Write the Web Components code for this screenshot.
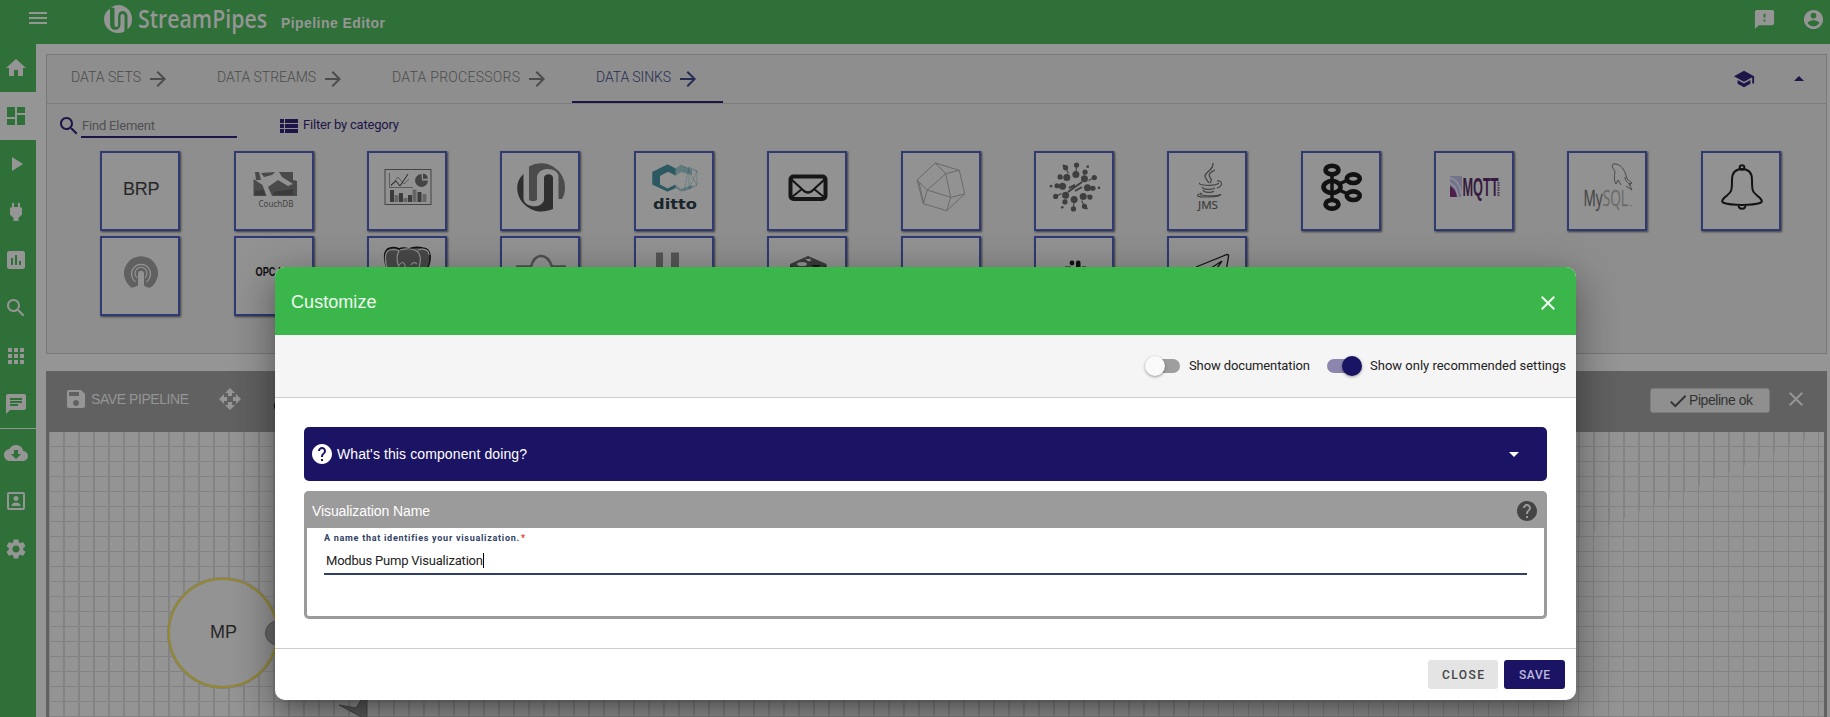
<!DOCTYPE html>
<html lang="en"><head><meta charset="utf-8"><title>StreamPipes - Pipeline Editor</title>
<style>html,body{margin:0;height:100%;overflow:hidden;background:#959595;font-family:"Liberation Sans",Arial,sans-serif}</style></head>
<body><sp-app></sp-app>
<script>
const define=(name,css,html,init)=>{
  const t=document.createElement('template');
  t.innerHTML=`<style>*{box-sizing:border-box}:host{display:block;box-sizing:border-box}${css}</style>${html}`;
  customElements.define(name,class extends HTMLElement{
    connectedCallback(){ if(this.shadowRoot)return;
      const r=this.attachShadow({mode:'open'}); r.appendChild(t.content.cloneNode(true)); if(init)init(this,r); }
  });
};
/* ---- icon set on a 24 unit grid ---- */
const ICONS={
 menu:'M3 18h18v-2H3v2zm0-5h18v-2H3v2zm0-7v2h18V6H3z',
 home:'M10 20v-6h4v6h5v-8h3L12 3 2 12h3v8z',
 dashboard:'M3 13h8V3H3v10zm0 8h8v-6H3v6zm10 0h8V11h-8v10zm0-18v6h8V3h-8z',
 play:'M8 5v14l11-7z',
 power:'M16.01 7L16 3h-2v4h-4V3H8v4h-.01C7 6.99 6 7.99 6 8.99v5.49L9.5 18v3h5v-3l3.5-3.51v-5.5c0-1-1-2-1.99-1.99z',
 chart:'M19 3H5c-1.1 0-2 .9-2 2v14c0 1.1.9 2 2 2h14c1.1 0 2-.9 2-2V5c0-1.1-.9-2-2-2zM9 17H7v-7h2v7zm4 0h-2V7h2v10zm4 0h-2v-4h2v4z',
 search:'M15.5 14h-.79l-.28-.27C15.41 12.59 16 11.11 16 9.5 16 5.91 13.09 3 9.5 3S3 5.91 3 9.5 5.91 16 9.5 16c1.61 0 3.09-.59 4.23-1.57l.27.28v.79l5 4.99L20.49 19l-4.99-5zm-6 0C7.01 14 5 11.99 5 9.5S7.01 5 9.5 5 14 7.01 14 9.5 11.99 14 9.5 14z',
 apps:'M4 8h4V4H4v4zm6 12h4v-4h-4v4zm-6 0h4v-4H4v4zm0-6h4v-4H4v4zm6 0h4v-4h-4v4zm6-10v4h4V4h-4zm-6 4h4V4h-4v4zm6 6h4v-4h-4v4zm0 6h4v-4h-4v4z',
 chat:'M20 2H4c-1.1 0-1.99.9-1.99 2L2 22l4-4h14c1.1 0 2-.9 2-2V4c0-1.1-.9-2-2-2zM6 9h12v2H6V9zm8 5H6v-2h8v2zm4-6H6V6h12v2z',
 cloud:'M19.35 10.04C18.67 6.59 15.64 4 12 4 9.11 4 6.6 5.64 5.35 8.04 2.34 8.36 0 10.91 0 14c0 3.31 2.69 6 6 6h13c2.76 0 5-2.24 5-5 0-2.64-2.05-4.78-4.65-4.96zM17 13l-5 5-5-5h3V9h4v4h3z',
 person:'M19 5v14H5V5h14m0-2H5c-1.1 0-2 .9-2 2v14c0 1.1.9 2 2 2h14c1.1 0 2-.9 2-2V5c0-1.1-.9-2-2-2zm-7 9c1.65 0 2.5-1 2.5-2.5S13.65 7 12 7 9.500 8 9.500 9.500 10.350 12 12 12zm4.500 5H7.500v-.7c0-1.6 2.500-2.800 4.500-2.800s4.500 1.200 4.500 2.800v.7z',
 gear:'M19.140 12.940c.04-.3.06-.61.06-.94 0-.32-.02-.64-.07-.94l2.030-1.580c.18-.14.23-.41.12-.61l-1.920-3.320c-.12-.22-.37-.29-.59-.22l-2.390.96c-.5-.38-1.030-.7-1.620-.94l-.36-2.540c-.04-.24-.24-.41-.48-.41h-3.840c-.24 0-.43.17-.47.41l-.36 2.540c-.59.24-1.130.57-1.620.94l-2.390-.96c-.22-.08-.47 0-.59.22L2.740 8.870c-.12.21-.08.47.12.61l2.030 1.580c-.05.3-.09.63-.09.94s.02.64.07.94l-2.030 1.580c-.18.14-.23.41-.12.61l1.920 3.320c.12.22.37.29.59.22l2.390-.96c.5.38 1.030.7 1.620.94l.36 2.540c.05.24.24.41.48.41h3.840c.24 0 .44-.17.47-.41l.36-2.540c.59-.24 1.130-.56 1.620-.94l2.390.96c.22.08.47 0 .59-.22l1.920-3.320c.12-.22.07-.47-.12-.61l-2.010-1.580zM12 15.600c-1.980 0-3.600-1.620-3.600-3.600s1.620-3.600 3.600-3.600 3.600 1.620 3.600 3.600-1.620 3.600-3.600 3.600z',
 feedback:'M20 2H4c-1.1 0-1.99.9-1.99 2L2 22l4-4h14c1.1 0 2-.9 2-2V4c0-1.1-.9-2-2-2zm-7 12h-2v-2h2v2zm0-4h-2V6h2v4z',
 account:'M12 2C6.48 2 2 6.48 2 12s4.480 10 10 10 10-4.480 10-10S17.520 2 12 2zm0 3c1.660 0 3 1.340 3 3s-1.340 3-3 3-3-1.340-3-3 1.340-3 3-3zm0 14.200c-2.500 0-4.710-1.280-6-3.220.03-1.990 4-3.080 6-3.080 1.990 0 5.970 1.090 6 3.080-1.290 1.940-3.500 3.220-6 3.220z',
 arrow:'M12 4l-1.410 1.410L16.170 11H4v2h12.170l-5.580 5.590L12 20l8-8z',
 school:'M5 13.180v4L12 21l7-3.820v-4L12 17l-7-3.820zM12 3L1 9l11 6 9-4.910V17h2V9L12 3z',
 up:'M7 14l5-5 5 5z', down:'M7 10l5 5 5-5z',
 list:'M3 14h4v-4H3v4zm0 5h4v-4H3v4zM3 9h4V5H3v4zm5 5h13v-4H8v4zm0 5h13v-4H8v4zM8 5v4h13V5H8z',
 save:'M17 3H5c-1.110 0-2 .9-2 2v14c0 1.100.89 2 2 2h14c1.100 0 2-.9 2-2V7l-4-4zm-5 16c-1.660 0-3-1.340-3-3s1.340-3 3-3 3 1.340 3 3-1.340 3-3 3zm3-10H5V5h10v4z',
 move:'M10 9h4V6h3l-5-5-5 5h3v3zm-1 1H6V7l-5 5 5 5v-3h3v-4zm14 2l-5-5v3h-3v4h3v3l5-5zm-9 3h-4v3H7l5 5 5-5h-3v-3z',
 close:'M19 6.410L17.590 5 12 10.590 6.410 5 5 6.410 10.590 12 5 17.590 6.410 19 12 13.410 17.590 19 19 17.590 13.410 12z',
 check:'M9 16.170L4.830 12l-1.420 1.410L9 19 21 7l-1.410-1.410z',
 help:'M12 2C6.480 2 2 6.480 2 12s4.480 10 10 10 10-4.480 10-10S17.520 2 12 2zm1 17h-2v-2h2v2zm2.070-7.750l-.9.92C13.450 12.900 13 13.500 13 15h-2v-.5c0-1.100.45-2.100 1.170-2.830l1.240-1.260c.37-.36.59-.86.59-1.410 0-1.100-.9-2-2-2s-2 .9-2 2H8c0-2.210 1.790-4 4-4s4 1.790 4 4c0 .88-.36 1.680-.93 2.250z'
};
define('sp-icon',':host{flex:none;width:24px;height:24px}svg{display:block;width:100%;height:100%;fill:currentColor}','<svg viewBox="0 0 24 24"><path/></svg>',
 (h,r)=>r.querySelector('path').setAttribute('d',ICONS[h.getAttribute('name')]));
/* one-line label tracked out (or in) to a set width */
define('sp-label',':host{white-space:nowrap;flex:none}span{display:inline-block}','<span></span>',(h,r)=>{
  const s=r.querySelector('span'); s.textContent=h.getAttribute('text'); const w=+h.getAttribute('w');
  if(w){ s.style.letterSpacing='0px'; const n=s.getBoundingClientRect().width; s.style.letterSpacing=(w-n)/(s.textContent.length-1)+'px'; h.style.width=w+'px'; }
});
define('sp-header',`:host{height:44px;background:#2e7037;color:#959595;display:flex;align-items:flex-start}
 .m{margin:6px 0 0 26px}.logo{margin:5px 0 0 54px;display:block}
 .t{margin:15px 0 0 -17px;font-weight:bold;font-size:14px;line-height:17px}.sp{flex:1}
 .f{width:23px;height:23px;margin:8px 26px 0 0}.a{width:23px;height:23px;margin:8px 5px 0 0}`,
 `<sp-icon class="m" name="menu"></sp-icon>
 <svg class="logo" width="194" height="34" viewBox="104 5 194 34"><g fill="#959595"><path d="M111 7.500a14 14 0 0 1 15 0 14 14 0 0 1 6 11.500c0 5-1.500 8-4.500 10.500V16a4.500 4.500 0 0 0-9 0v9a2 2 0 0 1-4 0V8z"/><path d="M110 8.800C106 11 104 15 104 19a14 14 0 0 0 20.500 12.500V16a2 2 0 0 0-4 0v8c0 7-9 7-10 1z"/></g>
 <path d="M111 9v15.500c0 6 8 6 8 0V16.500c0-6 7-6 7 0V31" fill="none" stroke="#2e7037" stroke-width="1.500"/>
 <text x="138" y="28" font-size="25" font-family="Open Sans,Noto Sans,sans-serif" font-weight="600" fill="#959595" textLength="129" lengthAdjust="spacingAndGlyphs">StreamPipes</text></svg>
 <sp-label class="t" text="Pipeline Editor" w="104"></sp-label><div class="sp"></div><sp-icon class="f" name="feedback"></sp-icon><sp-icon class="a" name="account"></sp-icon>`);
define('sp-nav',`:host{width:36px;background:#2e7037;color:#959595}div{height:48px;padding:12px 4px}.on{background:#959595;color:#2e7037}hr{height:1px;border:0;margin:0;background:#959595}`,
 ['home','dashboard','play','power','chart','search','apps','chat','|','cloud','person','gear'].map(n=>n=='|'?'<hr>':`<div class="${n=='dashboard'?'on':''}"><sp-icon name="${n}"></sp-icon></div>`).join(''));
define('sp-tab',`:host{display:flex;align-items:center;height:48px;padding:0 23px 0 24px;gap:5px;color:#4c4c4c;font:300 14px Roboto,sans-serif}
 :host([on]){color:#262d52;box-shadow:inset 0 -2px #1d1547}sp-label{margin-top:-4px}`,'<sp-label></sp-label><sp-icon name="arrow"></sp-icon>',
 (h,r)=>{const l=r.querySelector('sp-label');const n=document.createElement('sp-label');n.setAttribute('text',h.getAttribute('text'));n.setAttribute('w',h.getAttribute('w'));l.replaceWith(n)});

const burst=()=>{let s='';const c=[41,36];
 for(let i=0;i<8;i++){const a=(i*45+4)*Math.PI/180;s+=`<circle cx="${c[0]+12.500*Math.sin(a)}" cy="${c[1]-12.500*Math.cos(a)}" r="3.500"/>`}
 for(let i=0;i<12;i++){const a=(i*30+4)*Math.PI/180,q=i%3==0,r=q?(i%6?18:22):(i%3==1?18:21.500),x=c[0]+r*Math.sin(a),y=c[1]-r*Math.cos(a);s+=`<circle cx="${x}" cy="${y}" r="2.600"/><path d="M${x} ${y}L${c[0]+15*Math.sin(a)} ${c[1]-15*Math.cos(a)}" stroke="#3f3f3f" stroke-width="1.100"/>`}
 for(let i=0;i<6;i++){const a=(i*60+32)*Math.PI/180;s+=`<circle cx="${c[0]+24*Math.sin(a)}" cy="${c[1]-24*Math.cos(a)}" r="1.300"/>`}
 return `<g fill="#3f3f3f">${s}<path d="M34 41l14-10M35 37l6-3M41 40l7-4" stroke="#3f3f3f" stroke-width="2"/></g>`};
const ART={
 brp:'<text x="23" y="44" font-size="18" fill="#262626" textLength="36.500">BRP</text>',
 couch:'<path d="M21 21h4l2 8h-5zM45 21h14v8l4 1v15H38l-4-9 10-7 10 6 5-2-11-7zM19.500 28l9 6 4 11h-13zM27 22l14-1-3 3-8 2z" fill="#4a4a4a"/><path d="M21 40l9-1 1 5H21zM39 41l20-3v6H40z" fill="#3c3c3c"/><text x="24.500" y="55.500" font-family="Noto Sans" font-size="8" fill="#424242" textLength="35" lengthAdjust="spacingAndGlyphs">CouchDB</text>',
 dash:'<rect x="18" y="18.500" width="46" height="35" fill="none" stroke="#444"/><path d="M22.500 22v14.500H46M24 35l7-9 6 7 5-5" fill="none" stroke="#555" stroke-width=".9"/><path d="M24 34l5-4 4 5 8-12" fill="none" stroke="#222"/><path d="M54.500 23a6.500 6.500 0 1 0 6.500 6.500h-6z" fill="#444"/><path d="M56 28v-5.500a6 6 0 0 1 5 5z" fill="#444"/><path d="M23 39h4v12h-4zM32 42h4v9h-4zM41 44h4v7h-4zM50.500 41h4v10h-4z" fill="#3c3c3c"/><path d="M27.500 44h4v7h-4zM36.500 47h4v4h-4zM45.500 38.500h4V51h-4zM55.500 43h4v8h-4z" fill="#666"/>',
 unify:'<path d="M29 15.500A24 24 0 0 1 65 37c0 4-1 8-3 11h-3.500V26c0-10-20-11-21.500 0v22c0 3-8 3-8 0z" fill="#4b4b4b"/><path d="M23.500 23C15 30 15 45 25 54s20 7 28 4V27c0-5-9-5-9 0v22c-2 9-19 8-20.500-1z" fill="#2f2f2f"/>',
 ditto:'<path d="M33.500 13.500l8 4-0 3.500-8 0-7.500 4v9l7.500 4 8-4 0 3-8 3.500-15-7V21z" fill="#2d5a62"/><path d="M33.500 13.500l8 4v7l-8-4-7.500 4v9l7.500 4 8-4v3.500l-8 3.500-15-7V21z" fill="#2d5a62"/><path d="M41 18l6-4.500 11 5.500v5l-11-3-6 4zM41 34l6 4 11-4v3l-11 3.500-6-4z" fill="#416b70" opacity=".6"/><path d="M50 16l13 4v14l-13 6 5-24v22l8-18-8-4m0 22l8-4-8-14" fill="none" stroke="#34626a" stroke-width=".7" stroke-dasharray="1 1"/><text x="19" y="58" font-family="DejaVu Sans" font-weight="bold" font-size="13.500" fill="#18262c" textLength="44" lengthAdjust="spacingAndGlyphs">ditto</text>',
 mail:'<rect x="23.500" y="25.500" width="35" height="22.500" rx="3" fill="none" stroke="#161616" stroke-width="4"/><path d="M24 28l13 12q4 3 8 0l13-12M25 46l10-8M57 46l-10-8" fill="none" stroke="#161616" stroke-width="2.200"/>',
 poly:'<path d="M34.300 12l24 7.300L63.700 43l-18 16.700-23.400-7L16 29zM34.300 12l10.400 10.700 13.600-3.400M44.700 22.700L26.300 39 16 29M44.700 22.700l5 23.600L26.300 39l-4 13.700M49.700 46.300l14-3.300M49.700 46.300l-4 13.400M18 31l4.500 21" fill="none" stroke="#6a6a6a" stroke-width="1"/>',
 burst:burst(),
 jms:'<path d="M46 12c1 7-8 9-8 13 0 2 2 4 4 7M48 19c-8 4-6 6-4 9 1 2 0 3-1 4" fill="none" stroke="#444" stroke-width="1.300"/><path d="M33 32c-4 2 15 4 19 0M35 36c1 3 10 3 13 1M36 39c1 3 9 3 11 1M50 30c6-1 6 5 0 7M32 43c-5 3 3 3 9 3s13-1 13-3M35 42c-10 3 18 4 18 1" fill="none" stroke="#444" stroke-width="1.100"/><text x="31" y="57.700" font-family="Open Sans,Noto Sans" font-size="11.500" fill="#3b3b3b" stroke="#3b3b3b" stroke-width=".2" textLength="20" lengthAdjust="spacingAndGlyphs">JMS</text>',
 kafka:'<g fill="none" stroke="#121212" stroke-width="4.600"><path d="M31 24v24M38 33l9-4M38 39l9 4" stroke-width="3.500"/><ellipse cx="31" cy="19" rx="6.500" ry="4.300"/><ellipse cx="52.300" cy="27.700" rx="6.500" ry="4.300"/><ellipse cx="31" cy="36" rx="8.500" ry="6"/><ellipse cx="52.300" cy="44.700" rx="6.500" ry="4.300"/><ellipse cx="31" cy="53.300" rx="6.500" ry="4.300"/></g>',
 mqtt:'<rect x="16" y="25" width="12" height="21" fill="#73738a"/><path d="M16 27q10 2 12 19M16 32q7 3 8 14" stroke="#8f8f9c" stroke-width="1.500" fill="none"/><path d="M16 35q6 3 7 11h-7z" fill="#4e1d4c"/><text transform="translate(28.500 44.500) scale(.49 1)" font-size="26" font-weight="bold" fill="#361b40">MQTT</text><path d="M64.500 31v14" stroke="#443050" stroke-width="2" stroke-dasharray="1.500 1"/>',
 mysql:'<text x="16.500" y="55" font-family="Open Sans,Noto Sans" font-size="22" fill="#484848" stroke="#484848" stroke-width=".3" textLength="44.500" lengthAdjust="spacingAndGlyphs">My<tspan fill="#6c6c6c" stroke="#6c6c6c">SQL</tspan></text><path d="M62 54.500h3" stroke="#777"/><path d="M46 13c-2 3 1 5 2 8-1 5-1 9 1 12l2-4 3 5M46 13c8-1 12 6 14 15l5 4-3 1 3 6-6-4M58 26c0 4 3 6 6 8" fill="none" stroke="#4b4b4b"/>',
 bell:'<g fill="none" stroke="#131313" stroke-width="2"><circle cx="41" cy="16.500" r="2.300"/><path d="M41 18c-8 0-10 5-10 11 0 13-1 12-7 17-3 3-4 5-1 6 7 2.500 29 2.500 36 0 3-1 2-3-1-6-6-5-7-4-7-17 0-6-2-11-10-11zM37.500 54c0 5 7 5 7 0"/></g>',
 pod:'<g transform="translate(0 .7)"><path d="M32 51a17 17 0 1 1 18 0q-3 0-6-2V37a3 3 0 0 0-6 0v12q-3 1-6 2z" fill="#606060"/><g fill="none" stroke="#929292" stroke-width="1.200"><path d="M35.500 45a9.500 9.500 0 1 1 11 0M37 41a6 6 0 1 1 8 0"/></g><path d="M39.500 36h3v15h-3z" fill="#929292"/></g>',
 opc:'<text x="21.500" y="40.300" font-size="12.500" font-weight="bold" fill="#111" textLength="36" lengthAdjust="spacingAndGlyphs">OPC UA</text>',
 pg:'<path d="M22 36c-5-9-7-22 1-24 4-1 7 0 9 1 4-2 7-1 10 0 4-2 9-2 14-1 9 1 9 12 3 24z" fill="#484848" stroke="#131313" stroke-width="1.500"/><path d="M22 36c-5-9-5-21 1-22 4-1 8 0 9 1-3 5-2 12 0 16M33 14c7-2 14-1 17 1 4 4 4 10 2 16M51 14c6-2 11 0 11 5M32 29q4-5 6 0v5M50 28q-4-3-6 1" fill="none" stroke="#929292" stroke-width="1.200"/>',
 sum:'<path d="M16 30.500h15c4-14 16-14 21 0h14" fill="none" stroke="#505050" stroke-width="2.600"/>',
 bars:'<path d="M22 16.500h7V40h-7zM37 16.500h8V40h-8z" fill="#555"/>',
 redis:'<path d="M23 28l18-8 18.500 8v12H23z" fill="#3a3a3a"/><path d="M23 30l18 7 18.500-7" stroke="#202020" fill="none"/><ellipse cx="35" cy="28" rx="5" ry="2" fill="#929292"/><path d="M38 22.500l3 .8 3-1-1 1.700 2 1-4 .2z" fill="#999"/><path d="M44 29l10 0-5 3z" fill="#151515"/>',
 none:'',
 slack:'<g fill="#101010"><circle cx="38" cy="27" r="2.400"/><rect x="42" y="24.500" width="4.500" height="10" rx="2"/></g><path d="M31 30.500h6M48 30.500h4" stroke="#555"/>',
 tele:'<path d="M29 31l31-12.500q2 0 1.500 2l-2.500 15M44 32l11-7-5 7" fill="none" stroke="#141414" stroke-width="1.300"/>'
};
define('sp-card',`:host{width:80px;height:80px;background:#929292;border:2px solid #2f3a72;box-shadow:1px 1px 2px 0 #3c3c3c}svg{display:block;margin:-2px;width:80px;height:80px;font-family:"Liberation Sans",sans-serif}`,
 '<svg viewBox="0 0 80 80"></svg>',(h,r)=>{r.querySelector('svg').innerHTML=ART[h.getAttribute('art')]});
define('sp-elements',`:host{margin:10px 3px 0 10px;height:300px;border:1px solid #797979;background:#8e8e8e;color:#1d1547}
 .tabs{display:flex;height:49px;border-bottom:1px solid #7d7d7d}.sp{flex:1}
 .sc{margin:13px 32px 0 0;width:22px;height:22px}.up{margin:12px 15px 0 0}
 .bar{display:flex;height:34px;align-items:flex-start;font:13px Roboto,sans-serif}
 .s{margin:10px 0 0 10px;width:24px;height:24px}.in{margin-left:0;width:156px;height:34px;border-bottom:2px solid #1d1547;color:#505050;padding:14px 0 0 1px}
 .l{margin:10px 0 0 40px}.f{margin:13px 0 0 2px}
 .grid{display:grid;grid-template-columns:repeat(13,133.400px);gap:5px 0;margin:13px 0 0 26.500px;justify-items:center}`,
 `<div class="tabs"><sp-tab text="DATA SETS" w="70"></sp-tab><sp-tab text="DATA STREAMS" w="99"></sp-tab><sp-tab text="DATA PROCESSORS" w="128"></sp-tab><sp-tab on text="DATA SINKS" w="75"></sp-tab><div class="sp"></div><sp-icon class="sc" name="school"></sp-icon><sp-icon class="up" name="up"></sp-icon></div>
 <div class="bar"><sp-icon class="s" name="search"></sp-icon><div class="in"><sp-label text="Find Element" w="73"></sp-label></div><sp-icon class="l" name="list"></sp-icon><sp-label class="f" text="Filter by category" w="96"></sp-label></div>
 <div class="grid">${'brp couch dash unify ditto mail poly burst jms kafka mqtt mysql bell pod opc pg sum bars redis none slack tele'.split(' ').map(a=>`<sp-card art="${a}"></sp-card>`).join('')}</div>`);
define('sp-canvas',`:host{margin:17px 3px 0 10px;flex:1;border:3px solid #616161;border-top:0;border-bottom:0;background:#949494;display:flex;flex-direction:column}
 .bar{height:61px;flex:none;background:#616161;color:#959595;display:flex;align-items:flex-start;font-size:14px}
 .sv{margin:16px 0 0 15px}.st{margin:20px 0 0 3px;line-height:16px}.mv{margin:16px 0 0 29px}.mg{width:22px;height:22px;margin:26px 0 0 29px;color:#222}.sp{flex:1}
 .ok{margin:17px 14px 0 0;width:120px;height:25px;background:#8f8f8f;border:1px solid #7b7b7b;border-radius:3px;display:flex;color:#333;padding-left:15px;line-height:22px}.cl{margin:16px 16px 0 0}
 .ok sp-icon{width:22px;height:22px;margin:1px 0 0 1px}
 .paper{flex:1;position:relative;overflow:hidden;background:repeating-linear-gradient(90deg,transparent 0 14px,#838383 14px 15px),repeating-linear-gradient(180deg,transparent 0 14px,#838383 14px 15px)}
 .thick{position:absolute;inset:0;clip-path:polygon(0 0,1771px 0,1100px 295px,0 295px);background:repeating-linear-gradient(90deg,#848484 0 1px,transparent 1px 15px)}
 svg{position:absolute;left:0;top:0}`,
 `<div class="bar"><sp-icon class="sv" name="save"></sp-icon><sp-label class="st" text="SAVE PIPELINE" w="98"></sp-label><sp-icon class="mv" name="move"></sp-icon><sp-icon class="mg" name="search"></sp-icon><div class="sp"></div><div class="ok"><sp-icon name="check"></sp-icon><sp-label text="Pipeline ok" w="64"></sp-label></div><sp-icon class="cl" name="close"></sp-icon></div>
 <div class="paper"><div class="thick"></div><svg width="400" height="285" viewBox="49 432 400 285" font-family="Liberation Sans,sans-serif"><circle cx="223" cy="633" r="54.500" fill="#939393" stroke="#808080" stroke-width="3"/><circle cx="223" cy="633" r="54.200" fill="none" stroke="#94892c" stroke-width="2"/><text x="210" y="638" font-size="18" fill="#262626">MP</text><circle cx="277.500" cy="633" r="12" fill="#686868" stroke="#555"/><path d="M339 705l17 3 11-18v30z" fill="#5c5c5c" stroke="#4a4a4a"/></svg></div>`);
define('sp-toggle',`:host{display:flex;align-items:center;font:13px Roboto,sans-serif;color:#222}
 .k{width:35px;height:20px;display:flex;align-items:center;padding-left:5px}.k i{width:30px;height:14px;border-radius:7px;background:#9e9e9e;display:flex;align-items:center}
 .k b{flex:none;width:20px;height:20px;border-radius:50%;background:#fafafa;margin-left:-5px;box-shadow:0 1px 3px #0006}
 :host([on]) i{background:#8d87b0}:host([on]) b{margin-left:15px;background:#1b1464}`,'<div class="k"><i><b></b></i></div><slot></slot>');
define('sp-dialog',`:host{position:absolute;left:275px;top:267px;width:1301px;height:433px;border-radius:10px;background:#fff;overflow:hidden;display:flex;flex-direction:column}
 .h{height:68px;background:#3bb64b;color:#eefaf0;display:flex;align-items:center;padding:3px 16px 0;justify-content:space-between;font-size:18px}
 .t{height:63px;background:#f5f5f5;border-bottom:1px solid #ccc;display:flex;justify-content:flex-end;padding:21px 10px 0 0;align-items:flex-start}
 .t sp-toggle{height:20px}.t sp-toggle+sp-toggle{margin-left:12px}.t sp-label{margin:-1px 0 0 9px}.t [on] sp-label{margin-left:13px}.b{height:250px;padding:29px}
 .q{height:54px;border-radius:5px;background:#1b1464;color:#fff;display:flex;align-items:center;padding:0 21px 0 6px;font-size:14px}.q .s{flex:1}.q sp-label{margin-left:3px}
 .v{margin-top:10px;height:128px;border:3px solid #9b9b9b;border-top:0;border-radius:5px}
 .vh{height:37px;background:#9b9b9b;margin:0 -3px;border-radius:5px 5px 0 0;display:flex;align-items:center;justify-content:space-between;padding:0 8px;color:#fff;font-size:14px}.vh sp-icon{color:#444;margin:3px 0 0}.vh sp-label{margin-top:2px}
 .l{margin:5px 17px 0;display:flex;gap:2px;font:bold 9px/11px Roboto,sans-serif;color:#2f3f66;height:11px}.l .r{color:#e0371c}
 .i{margin:5px 17px 0;height:26px;border-bottom:2px solid #2f3f66;padding:3px 0 0 2px;display:flex;font:13px/15px Roboto,sans-serif;color:#222}.i i{width:1px;height:15px;background:#000;margin-top:1px}.i sp-label{margin-top:1px}
 .f{flex:1;border-top:1px solid #ccc;padding:11px 11px 0 0;display:flex;justify-content:flex-end;gap:6px;font:500 12px/31px Roboto,sans-serif}
 .f div{height:29px;border-radius:3px;background:#e4e4e4;color:#444;width:70px;padding-left:14px}.f .p{width:61px;background:#1b1464;color:#bdb9dd;padding-left:15px}`,
 `<div class="h"><sp-label text="Customize" w="85.500"></sp-label><sp-icon name="close"></sp-icon></div>
 <div class="t"><sp-toggle><sp-label text="Show documentation" w="121"></sp-label></sp-toggle><sp-toggle on><sp-label text="Show only recommended settings" w="196"></sp-label></sp-toggle></div>
 <div class="b"><div class="q"><sp-icon name="help"></sp-icon><sp-label text="What's this component doing?" w="190"></sp-label><div class="s"></div><sp-icon name="down"></sp-icon></div>
 <div class="v"><div class="vh"><sp-label text="Visualization Name" w="118"></sp-label><sp-icon name="help"></sp-icon></div>
 <div class="l"><sp-label text="A name that identifies your visualization." w="195"></sp-label><sp-label class="r" text="*"></sp-label></div>
 <div class="i"><sp-label text="Modbus Pump Visualization" w="157"></sp-label><i></i></div></div></div>
 <div class="f"><div><sp-label text="CLOSE" w="42"></sp-label></div><div class="p"><sp-label text="SAVE" w="31"></sp-label></div></div>`);
define('sp-app',`:host{position:relative;width:1830px;height:717px;overflow:hidden}.row{display:flex;height:673px}.main{flex:1;background:#959595;display:flex;flex-direction:column;min-width:0}
 .shade{position:absolute;left:275px;top:267px;width:1301px;height:433px;border-radius:10px;box-shadow:0 11px 15px -7px #0003,0 24px 38px 3px #00000024,0 9px 40px 4px #0000003a}`,
 '<sp-header></sp-header><div class="row"><sp-nav></sp-nav><div class="main"><sp-elements></sp-elements><sp-canvas></sp-canvas></div></div><div class="shade"></div><sp-dialog></sp-dialog>');
</script></body></html>
